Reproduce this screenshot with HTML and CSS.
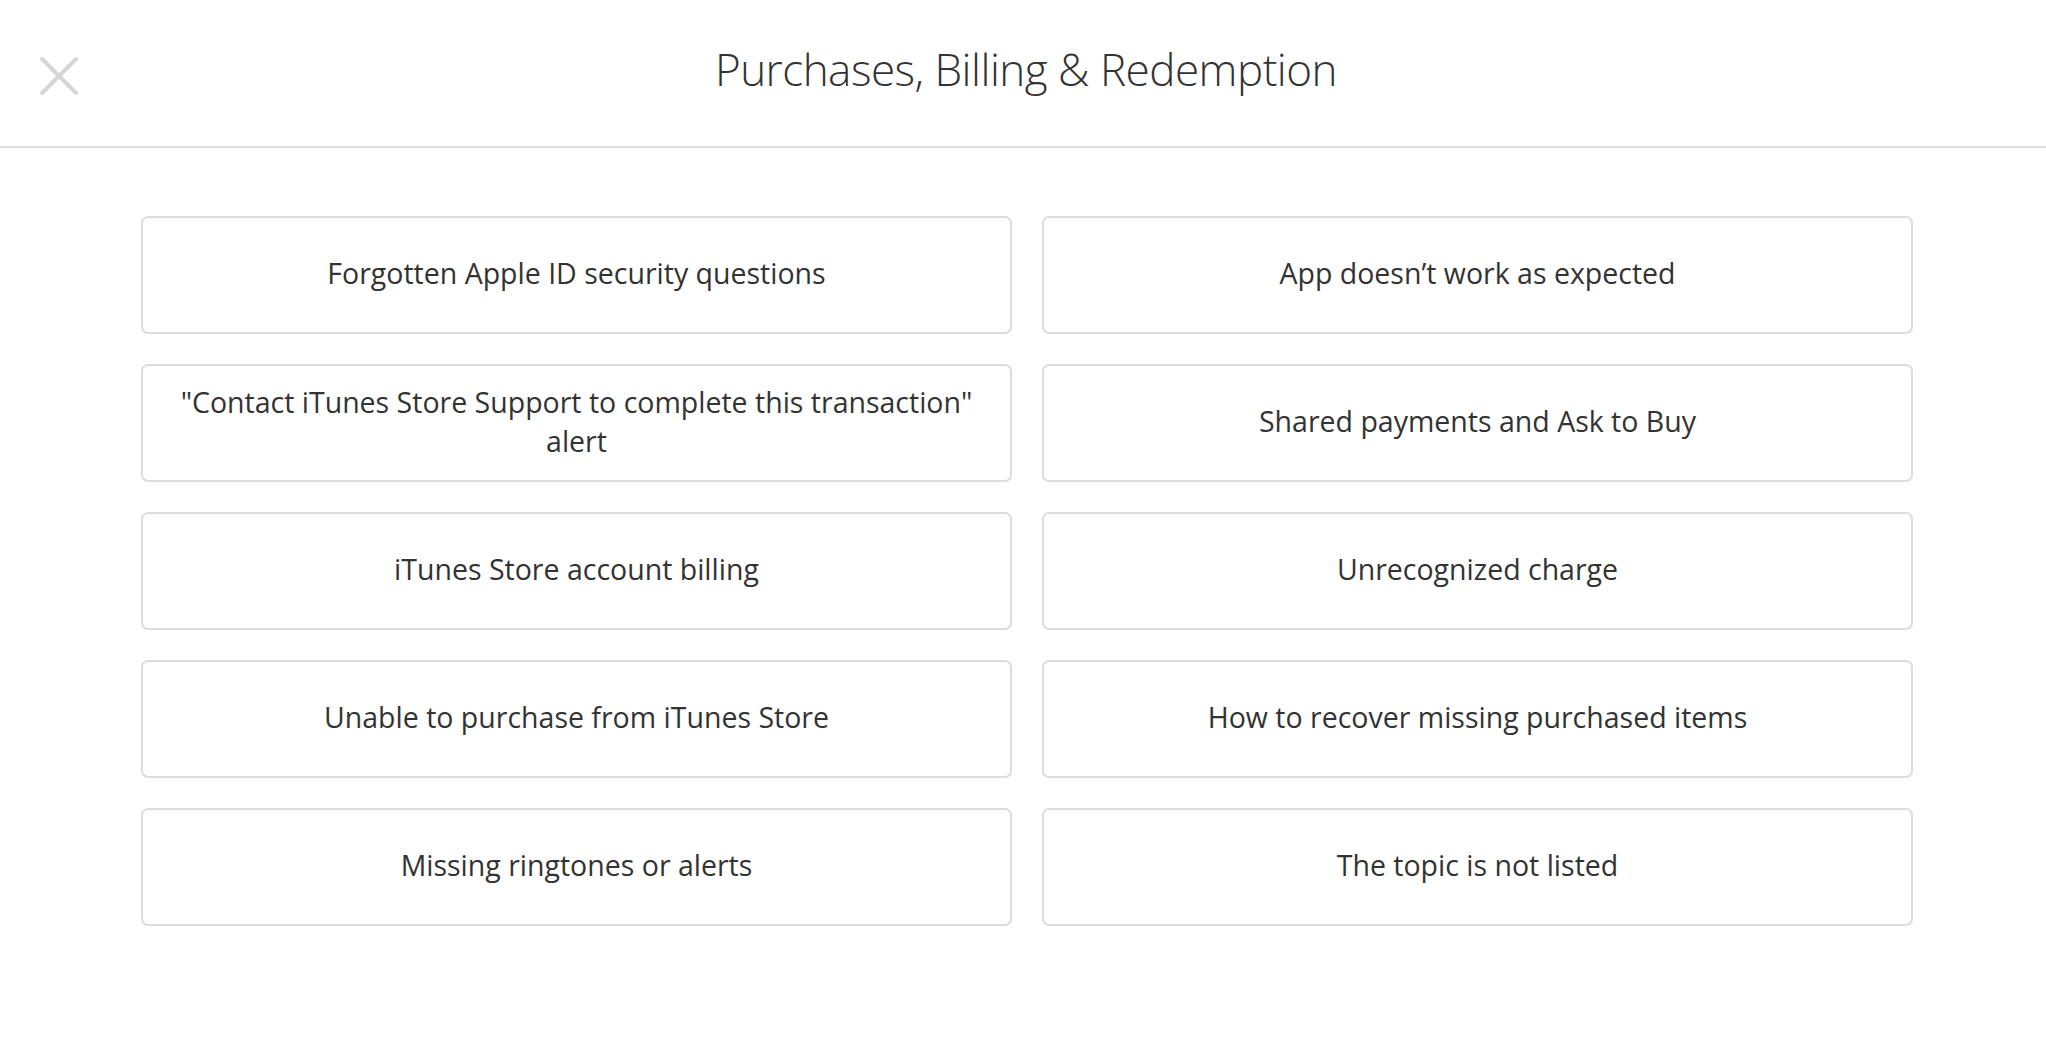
FILE: index.html
```html
<!DOCTYPE html>
<html lang="en">
<head>
  <meta charset="UTF-8" />
  <meta name="viewport" content="width=device-width, initial-scale=1.0"/>
  <title>Purchases, Billing &amp; Redemption</title>
  <link rel="stylesheet" href="styles.css">
</head>
<body>

<header class="header">
  <button class="close" type="button" aria-label="Close">
    <svg width="40" height="40" viewBox="0 0 40 40">
      <path d="M3 3 L37 37 M37 3 L3 37" stroke="#d6d6d6" stroke-width="4" stroke-linecap="round" fill="none"/>
    </svg>
  </button>
  <h1 class="title">Purchases, Billing &amp; Redemption</h1>
</header>

<main class="topics">
  <a class="topic" href="#">Forgotten Apple ID security questions</a>
  <a class="topic" href="#">App doesn’t work as expected</a>
  <a class="topic" href="#">"Contact iTunes Store Support to complete this transaction" alert</a>
  <a class="topic" href="#">Shared payments and Ask to Buy</a>
  <a class="topic" href="#">iTunes Store account billing</a>
  <a class="topic" href="#">Unrecognized charge</a>
  <a class="topic" href="#">Unable to purchase from iTunes Store</a>
  <a class="topic" href="#">How to recover missing purchased items</a>
  <a class="topic" href="#">Missing ringtones or alerts</a>
  <a class="topic" href="#">The topic is not listed</a>
</main>

</body>
</html>
```

FILE: styles.css
```css
body {
  margin: 0;
  background-color: #fff;
  font-family: "Open Sans", "Noto Sans", Arial, sans-serif;
  color: #333;
}
.header {
  position: relative;
  height: 146px;
  border-bottom: 2px solid #dedede;
  display: flex;
  align-items: center;
  justify-content: center;
}
.close {
  position: absolute;
  left: 39px;
  top: 56px;
  padding: 0;
  border: none;
  background: none;
  cursor: pointer;
}
.close svg {
  display: block;
}
.title {
  margin: 0 0 0 6px;
  font-size: 44px;
  font-weight: 300;
  letter-spacing: -0.5px;
  color: #333;
  padding-bottom: 8px;
}
.topics {
  display: grid;
  grid-template-columns: 871px 871px;
  column-gap: 30px;
  row-gap: 30px;
  padding: 68px 0 0 141px;
}
.topic {
  box-sizing: border-box;
  height: 118px;
  border: 2px solid #dcdcdc;
  border-radius: 7px;
  display: flex;
  align-items: center;
  justify-content: center;
  text-align: center;
  padding: 0 30px 3px;
  font-size: 28.5px;
  line-height: 39px;
  color: #333;
  text-decoration: none;
}
.topic:hover {
  background-color: #f7f7f7;
}
```
